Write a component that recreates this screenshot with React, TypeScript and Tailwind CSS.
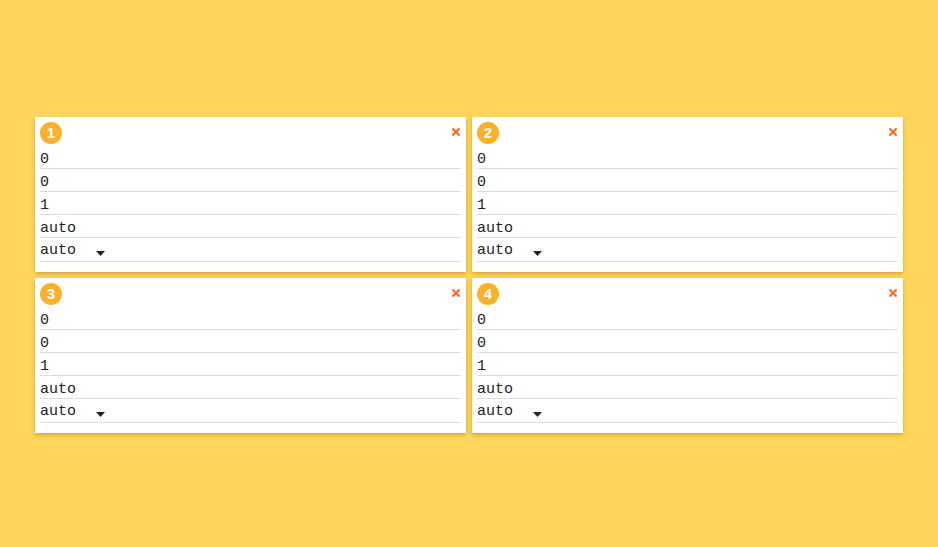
import React from "react";

const rows = ["0", "0", "1", "auto"];

function Card({ n }: { n: number }) {
  return (
    <div className="relative bg-white px-[5px] pt-[5px] pb-[10px] shadow-[0_2px_4px_rgba(120,80,0,0.35)]">
      <div className="h-[22px] flex items-center">
        <div className="w-[22px] h-[22px] rounded-full bg-[#fbb02c] text-white text-[15px] font-bold flex items-center justify-center font-['Liberation_Sans',sans-serif]">
          {n}
        </div>
      </div>
      <svg className="absolute right-[6px] top-[11px]" width="8" height="8" viewBox="0 0 8 8">
        <path d="M1.2 1.2L6.8 6.8M6.8 1.2L1.2 6.8" stroke="#ff6d1f" strokeWidth="2.2" strokeLinecap="square" />
      </svg>
      <div className="font-['Liberation_Mono',monospace] text-[15px] text-[#222]">
        {rows.map((r, i) => (
          <div key={i} className={`${i === 0 ? "h-[25px] pt-[9px]" : "h-[23px] pt-[7px]"} flex items-center border-b border-[#dcdcdc]`}>
            {r}
          </div>
        ))}
        <div className="h-[24px] flex items-center border-b border-[#dcdcdc] pt-[4px]">
          <span>auto</span>
          <svg className="ml-[20px] mt-[3px]" width="9" height="5" viewBox="0 0 9 5">
            <path d="M0 0H9L4.5 5Z" fill="#222" />
          </svg>
        </div>
      </div>
    </div>
  );
}

export default function App() {
  return (
    <div className="w-[938px] h-[547px] bg-[#ffd65b] pt-[117px] pl-[35px]">
      <div className="grid grid-cols-[431px_431px] gap-[6px]">
        <Card n={1} />
        <Card n={2} />
        <Card n={3} />
        <Card n={4} />
      </div>
    </div>
  );
}
